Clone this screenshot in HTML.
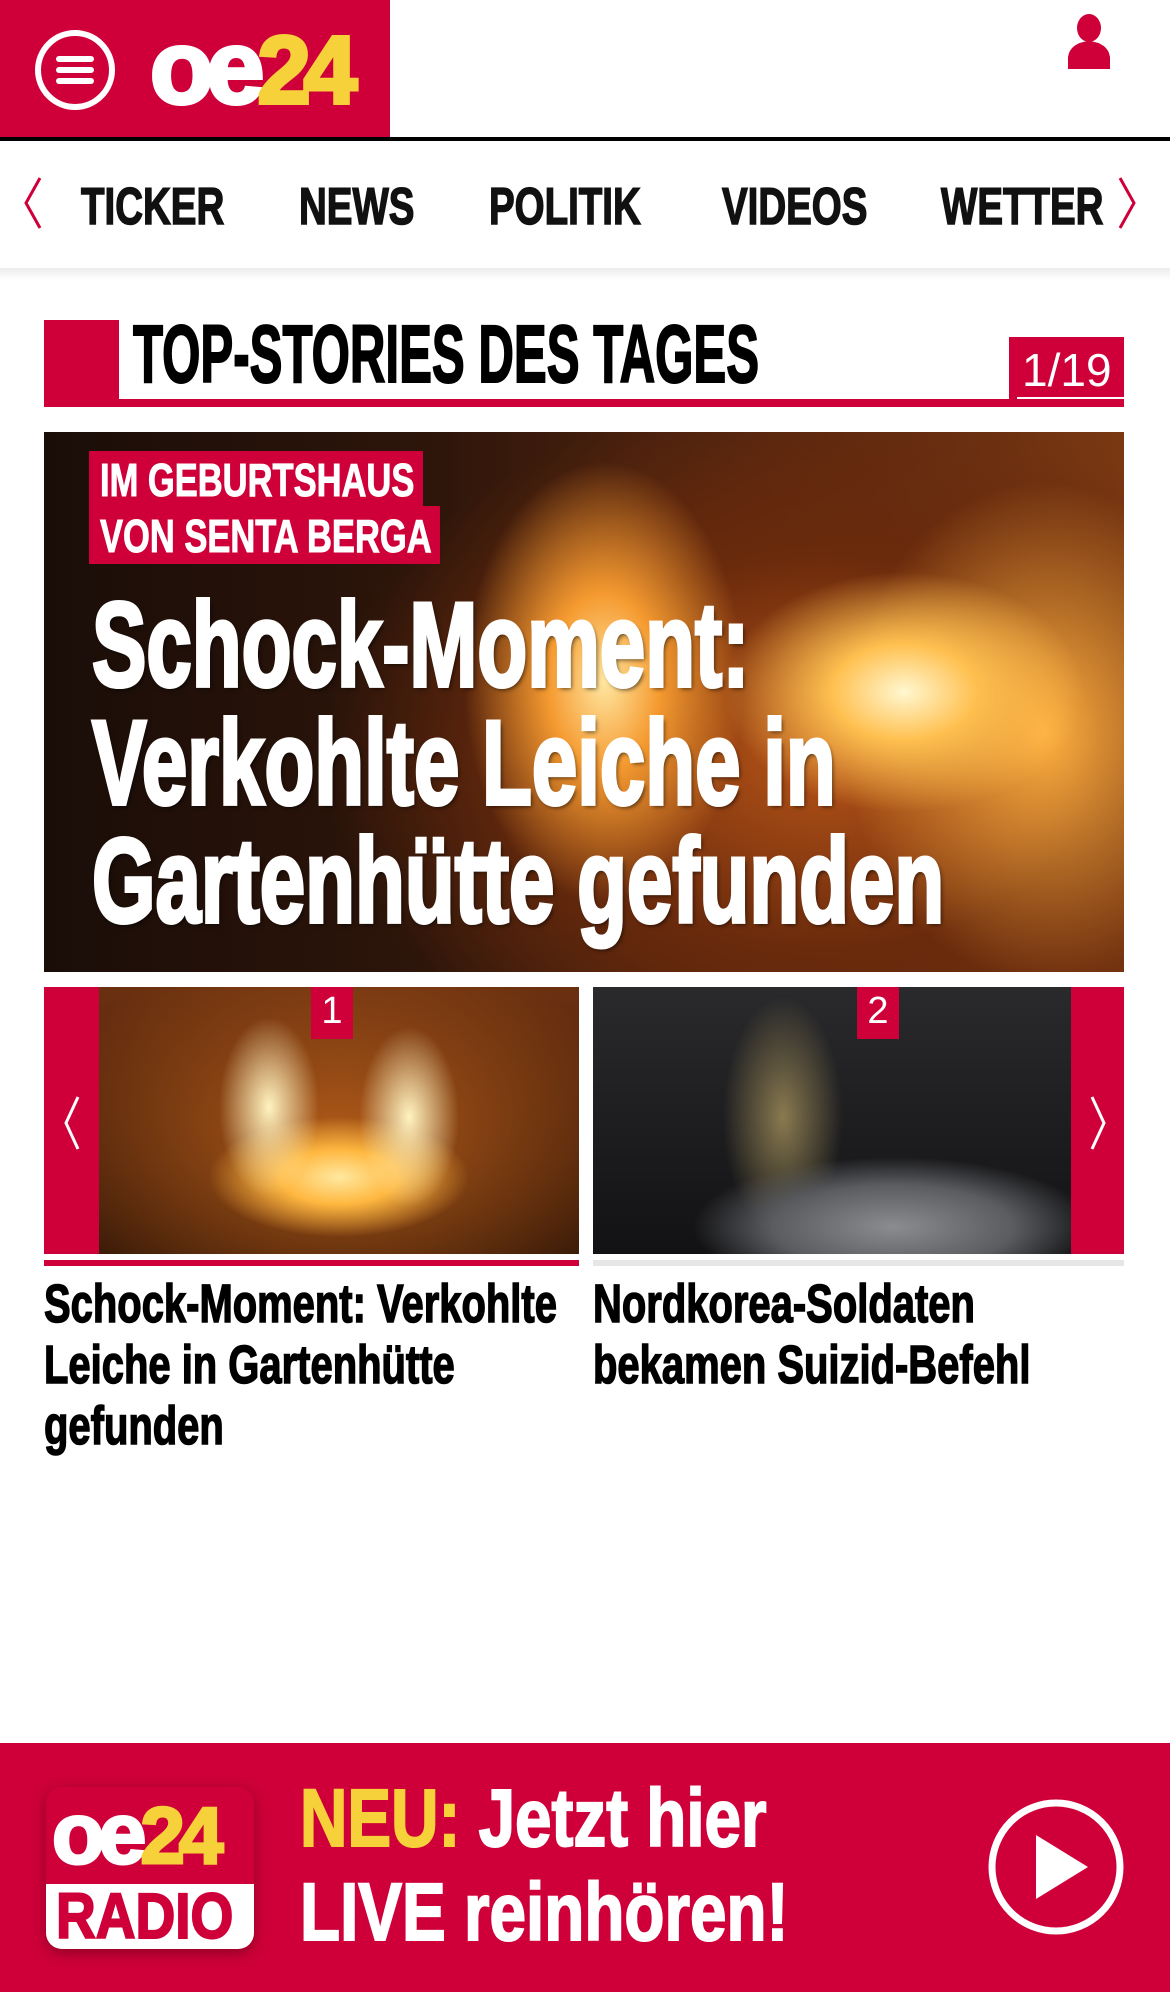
<!DOCTYPE html>
<html><head><meta charset="utf-8"><style>
*{margin:0;padding:0;box-sizing:border-box}
body{width:1170px;height:1992px;background:#fff;position:relative;overflow:hidden;font-family:"Liberation Sans Narrow","Liberation Sans",sans-serif;font-weight:bold}
.a{position:absolute;white-space:nowrap}
.s{display:inline-block;transform-origin:left top}
.red{background:#cf0039}
</style></head><body>
<!-- header -->
<div class="a red" style="left:0;top:0;width:390px;height:137px"></div>
<div class="a" style="left:0;top:137px;width:1170px;height:4px;background:#000"></div>
<svg class="a" style="left:33px;top:28px" width="84" height="84" viewBox="0 0 84 84"><circle cx="42" cy="42" r="37" fill="none" stroke="#fff" stroke-width="6"/><rect x="23" y="28" width="38" height="6" rx="3" fill="#fff"/><rect x="23" y="39" width="38" height="6" rx="3" fill="#fff"/><rect x="23" y="50" width="38" height="6" rx="3" fill="#fff"/></svg>
<div class="a" style="left:150px;top:16px;font-family:'Liberation Sans',sans-serif;font-size:104px;letter-spacing:-7px;line-height:104px;-webkit-text-stroke:4px"><span style="color:#fff;-webkit-text-stroke-color:#fff">oe</span><span style="color:#f7d13a;-webkit-text-stroke-color:#f7d13a;font-size:96px">24</span></div>
<svg class="a" style="left:1064px;top:13px" width="50" height="56" viewBox="0 0 50 56"><ellipse cx="25" cy="15" rx="12" ry="14" fill="#cf0039"/><path d="M4 56 L4 44 Q6 30 25 28 Q44 30 46 44 L46 56Z" fill="#cf0039"/></svg>
<!-- nav -->
<div class="a" style="left:0;top:268px;width:1170px;height:12px;background:linear-gradient(#ececec,#fff)"></div>
<svg class="a" style="left:18px;top:176px" width="28" height="54" viewBox="0 0 28 54"><path d="M22 2 L8 27 L22 52" fill="none" stroke="#cf0039" stroke-width="3"/></svg>
<svg class="a" style="left:1114px;top:176px" width="28" height="54" viewBox="0 0 28 54"><path d="M6 2 L20 27 L6 52" fill="none" stroke="#cf0039" stroke-width="3"/></svg>
<div class="a" style="top:177px;font-size:52px;line-height:60px;color:#111;left:0;-webkit-text-stroke:1.5px #111">
<span class="a" style="left:81px"><span class="s" style="transform:scaleX(0.74)">TICKER</span></span>
<span class="a" style="left:299px"><span class="s" style="transform:scaleX(0.74)">NEWS</span></span>
<span class="a" style="left:489px"><span class="s" style="transform:scaleX(0.74)">POLITIK</span></span>
<span class="a" style="left:722px"><span class="s" style="transform:scaleX(0.74)">VIDEOS</span></span>
<span class="a" style="left:941px"><span class="s" style="transform:scaleX(0.74)">WETTER</span></span>
</div>
<!-- section title -->
<div class="a red" style="left:44px;top:320px;width:75px;height:87px"></div>
<div class="a red" style="left:119px;top:399px;width:1005px;height:8px"></div>
<div class="a" style="left:133px;top:310px;font-size:82px;line-height:90px;color:#000;-webkit-text-stroke:2px #000"><span class="s" style="transform:scaleX(0.6)">TOP-STORIES DES TAGES</span></div>
<div class="a red" style="left:1009px;top:337px;width:115px;height:62px"></div>
<div class="a" style="left:1017px;top:397px;width:107px;height:2px;background:#fff"></div>
<div class="a" style="left:1022px;top:342px;font-family:'Liberation Sans Narrow',sans-serif;font-weight:normal;font-size:46px;color:#fff;line-height:56px">1/19</div>
<!-- hero -->
<div class="a" style="left:44px;top:432px;width:1080px;height:540px;background:
radial-gradient(ellipse 180px 120px at 860px 260px,#fff7d0 0%,#ffc050 40%,rgba(255,140,30,0) 100%),
radial-gradient(ellipse 140px 220px at 560px 250px,#ffe6a0 0%,#f59a30 40%,rgba(220,100,20,0) 100%),
radial-gradient(ellipse 200px 250px at 1000px 300px,#ffb040 0%,rgba(200,90,20,0) 100%),
radial-gradient(ellipse 500px 360px at 780px 320px,#b85518 0%,#6a2a0c 55%,rgba(40,15,5,0) 100%),
linear-gradient(90deg,#1a0d08 0%,#2d150a 35%,#5a2810 70%,#7a3812 100%)"></div>
<div class="a red" style="left:89px;top:451px;width:334px;height:56px"></div>
<div class="a red" style="left:89px;top:506px;width:351px;height:58px"></div>
<div class="a" style="left:100px;top:452px;font-size:46px;line-height:56px;color:#fff;-webkit-text-stroke:1px #fff"><span class="s" style="transform:scaleX(0.75)">IM GEBURTSHAUS<br>VON SENTA BERGA</span></div>
<div class="a" style="left:92px;top:586px;font-size:120px;line-height:118px;color:#fff;-webkit-text-stroke:4px #fff;text-shadow:3px 3px 5px rgba(0,0,0,.6)"><span class="s" style="transform:scaleX(0.68)">Schock-Moment:<br>Verkohlte Leiche in<br>Gartenhütte gefunden</span></div>
<!-- thumbnails -->
<div class="a red" style="left:44px;top:987px;width:535px;height:267px"></div>
<div class="a" style="left:99px;top:987px;width:480px;height:267px;background:
radial-gradient(ellipse 50px 90px at 170px 120px,#fff3c0 0%,rgba(255,180,60,0) 100%),
radial-gradient(ellipse 50px 90px at 310px 130px,#fff3c0 0%,rgba(255,180,60,0) 100%),
radial-gradient(ellipse 130px 60px at 240px 190px,#ffe8a0 0%,#ffb840 45%,rgba(230,120,30,0) 100%),
radial-gradient(ellipse 300px 200px at 240px 150px,#b05a18 0%,rgba(90,40,10,0) 100%),
linear-gradient(#6a3010,#3a1a08)"></div>
<div class="a red" style="left:311px;top:987px;width:42px;height:52px"></div>
<div class="a" style="left:311px;top:990px;width:42px;text-align:center;font-weight:normal;font-size:38px;color:#fff">1</div>
<svg class="a" style="left:56px;top:1093px" width="30" height="60" viewBox="0 0 30 60"><path d="M22 4 L10 30 L22 56" fill="none" stroke="#fff" stroke-width="3"/></svg>
<div class="a" style="left:593px;top:987px;width:531px;height:267px;background:
radial-gradient(ellipse 200px 70px at 300px 240px,#8a8c90 0%,#5a5c60 60%,rgba(40,40,40,0) 100%),
radial-gradient(ellipse 60px 120px at 190px 130px,#8a7a50 0%,rgba(60,50,30,0) 100%),
linear-gradient(#2a2a2c,#121214)"></div>
<div class="a red" style="left:1071px;top:987px;width:53px;height:267px"></div>
<div class="a red" style="left:857px;top:987px;width:42px;height:52px"></div>
<div class="a" style="left:857px;top:990px;width:42px;text-align:center;font-weight:normal;font-size:38px;color:#fff">2</div>
<svg class="a" style="left:1084px;top:1093px" width="30" height="60" viewBox="0 0 30 60"><path d="M8 4 L20 30 L8 56" fill="none" stroke="#fff" stroke-width="3"/></svg>
<div class="a red" style="left:44px;top:1260px;width:535px;height:6px"></div>
<div class="a" style="left:593px;top:1260px;width:531px;height:6px;background:#e6e6e6"></div>
<div class="a" style="left:44px;top:1274px;font-size:54px;line-height:61px;color:#000;-webkit-text-stroke:1.5px #000"><span class="s" style="transform:scaleX(0.74)">Schock-Moment: Verkohlte<br>Leiche in Gartenhütte<br>gefunden</span></div>
<div class="a" style="left:593px;top:1274px;font-size:54px;line-height:61px;color:#000;-webkit-text-stroke:1.5px #000"><span class="s" style="transform:scaleX(0.74)">Nordkorea-Soldaten<br>bekamen Suizid-Befehl</span></div>
<!-- footer banner -->
<div class="a red" style="left:0;top:1743px;width:1170px;height:249px"></div>
<div class="a" style="left:46px;top:1787px;width:208px;height:162px;border-radius:16px;background:#cf0039;box-shadow:0 4px 14px rgba(80,0,20,.5);overflow:hidden">
<div class="a" style="left:6px;top:2px;font-family:'Liberation Sans',sans-serif;font-size:86px;letter-spacing:-6px;line-height:90px;-webkit-text-stroke:3px"><span style="color:#fff;-webkit-text-stroke-color:#fff">oe</span><span style="color:#f7d13a;-webkit-text-stroke-color:#f7d13a;font-size:80px">24</span></div>
<div class="a" style="left:0;top:97px;width:208px;height:65px;background:#fff"></div>
<div class="a" style="left:10px;top:98px;font-family:'Liberation Sans',sans-serif;font-size:64px;line-height:62px;color:#cf0039;-webkit-text-stroke:2px #cf0039"><span class="s" style="transform:scaleX(0.86)">RADIO</span></div>
</div>
<div class="a" style="left:300px;top:1772px;font-family:'Liberation Sans Narrow',sans-serif;font-size:82px;line-height:94px;color:#fff;-webkit-text-stroke:2px"><span class="s" style="transform:scaleX(0.8)"><span style="color:#f7d13a">NEU:</span> Jetzt hier<br>LIVE reinhören!</span></div>
<svg class="a" style="left:986px;top:1797px" width="140" height="140" viewBox="0 0 140 140"><circle cx="70" cy="70" r="64" fill="none" stroke="#fff" stroke-width="7"/><path d="M50 38 L102 70 L50 102Z" fill="#fff"/></svg>
</body></html>
